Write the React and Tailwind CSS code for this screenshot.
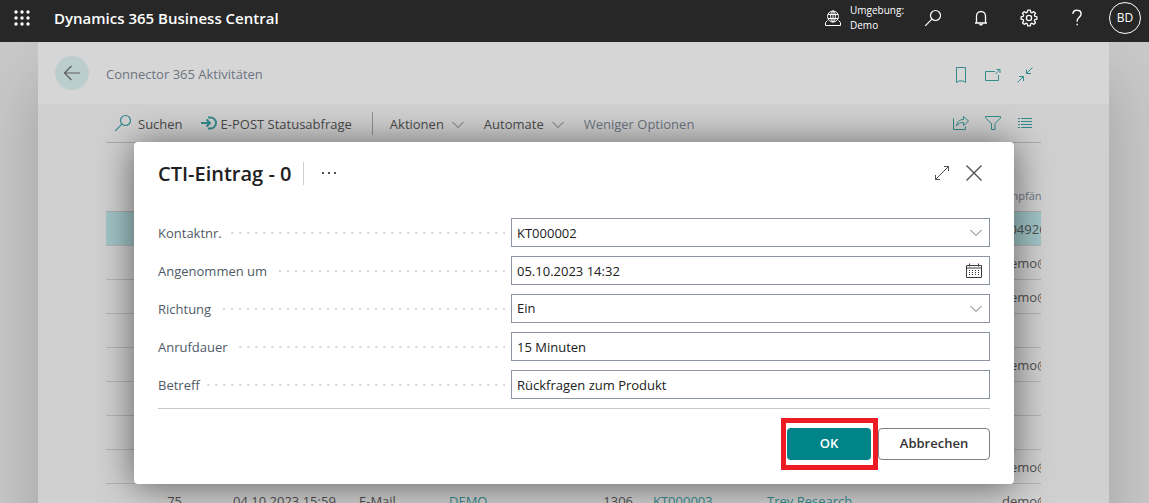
import React from "react";

function Icon({ size = 16, className = "", children, strokeWidth = 1 }) {
  return (
    <svg
      width={size}
      height={size}
      viewBox={`0 0 ${size} ${size}`}
      fill="none"
      stroke="currentColor"
      strokeWidth={strokeWidth}
      className={`shrink-0 ${className}`}
      aria-hidden="true"
    >
      {children}
    </svg>
  );
}

const SearchIcon = ({ className }) => (
  <Icon size={18} className={className} strokeWidth={1.2}>
    <circle cx="11.5" cy="6.5" r="5" />
    <path d="M7.9 10.1 1.2 16.8" />
  </Icon>
);

const Chevron = ({ className = "" }) => (
  <svg width="12" height="8" viewBox="0 0 12 8" fill="none" stroke="currentColor" className={`shrink-0 ${className}`} aria-hidden="true">
    <path d="M0.5 1 6 6.5 11.5 1" />
  </svg>
);

const GlobeIcon = () => (
  <Icon size={18}>
    <circle cx="9" cy="7.5" r="5.5" />
    <ellipse cx="9" cy="7.5" rx="2.4" ry="5.5" />
    <path d="M9 2v11M4 5.5h10M4 9.5h10" />
    <path d="M3.500 11.500 1.500 13.500v3h15v-3l-2-2" />
  </Icon>
);

const BellIcon = () => (
  <Icon size={18} strokeWidth={1.3}>
    <path d="M4.500 14V7a4.500 4.500 0 0 1 9 0v7M3 14h12" />
    <path d="M7.500 14.500a1.500 1.500 0 0 0 3 0" />
  </Icon>
);

const GearIcon = () => (
  <Icon size={18} strokeWidth={1.3}>
    <circle cx="9" cy="9" r="2.600" />
    <path
      strokeLinejoin="round"
      d="M7.700 1.200h2.600l.4 2 1.300.6 1.800-1.200 1.700 1.700-1.200 1.800.6 1.300 2 .4v2.400l-2 .4-.6 1.300 1.200 1.800-1.700 1.700-1.800-1.200-1.300.6-.4 2H7.700l-.4-2-1.300-.6-1.800 1.200-1.700-1.700 1.200-1.800-.6-1.300-2-.4V7.800l2-.4.6-1.300-1.200-1.800 1.700-1.700L6 3.800l1.300-.6z"
    />
  </Icon>
);

const HelpIcon = () => (
  <Icon size={18} strokeWidth={1.4}>
    <path d="M4.800 4.800A4.100 4.100 0 0 1 9 1.200c2.400 0 4.100 1.500 4.100 3.700 0 3.200-3.900 3.600-3.900 7v.8" />
    <path d="M8.500 15.500h1.400" />
  </Icon>
);

const EPostIcon = () => (
  <Icon size={16} strokeWidth={2}>
    <path d="M0 8h9M5.500 4.500 9 8l-3.500 3.500" />
    <path d="M7 2.500h2.500a5.500 5.500 0 0 1 0 11H7" strokeWidth="2" />
  </Icon>
);

const BookmarkIcon = () => (
  <Icon>
    <path d="M3.500.5h9v15L10 14H6l-2.500 1.500z" />
  </Icon>
);

const PopOutIcon = () => (
  <Icon>
    <path d="M10 4.500H.5v9h13V8" />
    <path d="M10.500 7 15 2.500M11.500 2.500H15v3.500" />
  </Icon>
);

const CollapseIcon = () => (
  <Icon>
    <path d="M15.500.5 9.500 6.500M9.500 2.500v4h4.500M.5 15.500l6-6M2 9.500h4.500V14" />
  </Icon>
);

const ShareIcon = () => (
  <Icon>
    <path d="M.5 3.500v11h12v-3" />
    <path d="M3.500 11c.4-4 2.800-6.500 7-6.500v-3L15.500 6l-5 4.500v-3c-3.500 0-5.500 1-7 3.500z" />
  </Icon>
);

const FilterIcon = () => (
  <Icon>
    <path d="M.5 1.500h15v1.500L10 8.500v6H6.500v-6L.5 3z" />
  </Icon>
);

const ListIcon = () => (
  <Icon>
    <path d="M1 3.500h2M4 3.500h11M1 6.500h2M4 6.500h11M1 9.500h2M4 9.500h11M1 12.500h2M4 12.500h11" />
  </Icon>
);

const CalendarIcon = () => (
  <Icon>
    <path d="M.5 2.500h15v12H.5zM3.500.5v3M12.500.5v3M.5 5h15" />
    <path d="M3 7.500h10.500M3 9.500h10.500M3 11.500h10.500" strokeDasharray="1 2" />
  </Icon>
);

const IconButton = ({ label, children, className = "" }) => (
  <button type="button" aria-label={label} className={`flex items-center justify-center ${className}`}>
    {children}
  </button>
);

function TopBar() {
  return (
    <header className="flex h-[42px] shrink-0 items-center bg-[#272727] pb-1.5 pl-3 pr-2 text-white">
      <IconButton label="App-Startfeld" className="size-5">
        <svg width="16" height="16" viewBox="0 0 16 16" fill="currentColor" aria-hidden="true">
          {[2, 8, 14].map((y) => [2, 8, 14].map((x) => <circle key={`${x}-${y}`} cx={x} cy={y} r="1.700" />))}
        </svg>
      </IconButton>
      <a href="#start" className="ml-[22px] text-[15px] font-semibold">
        Dynamics 365 Business Central
      </a>
      <div className="ml-auto flex items-center">
        <GlobeIcon />
        <div className="ml-2 w-[66px] text-[10px] font-medium leading-[15px]">
          Umgebung:
          <br />
          Demo
        </div>
        <div className="mr-[15px] flex gap-[14px]">
          <IconButton label="Suchen" className="w-[34px]"><SearchIcon /></IconButton>
          <IconButton label="Benachrichtigungen" className="w-[34px]"><BellIcon /></IconButton>
          <IconButton label="Einstellungen" className="w-[34px]"><GearIcon /></IconButton>
          <IconButton label="Hilfe" className="w-[34px]"><HelpIcon /></IconButton>
        </div>
        <button type="button" className="size-8 rounded-full border border-white text-xs font-medium">
          BD
        </button>
      </div>
    </header>
  );
}

function Toolbar() {
  return (
    <div className="mx-[68px] flex h-[39px] items-center border-b border-[#ababab] text-[13px] text-[#4a4a4a]">
      <button type="button" className="flex items-center gap-1.5 pl-2">
        <SearchIcon className="text-[#358a8e]" />
        <span className="pt-1">Suchen</span>
      </button>
      <button type="button" className="ml-[18px] flex items-center gap-1">
        <span className="text-[#358a8e]"><EPostIcon /></span>
        <span className="pt-1">E-POST Statusabfrage</span>
      </button>
      <span className="ml-5 h-[23px] w-px bg-[#8b9098]" />
      <button type="button" className="ml-[17px] flex items-center gap-2">
        <span className="pt-1">Aktionen</span>
        <Chevron className="mt-1 text-[#6b6b6b]" />
      </button>
      <button type="button" className="ml-5 flex items-center gap-2">
        <span className="pt-1">Automate</span>
        <Chevron className="mt-1 text-[#6b6b6b]" />
      </button>
      <button type="button" className="ml-5 pt-1 text-[#6d7480]">Weniger Optionen</button>
      <div className="ml-auto mr-2 flex gap-4 text-[#358a8e]">
        <IconButton label="Teilen"><ShareIcon /></IconButton>
        <IconButton label="Filtern"><FilterIcon /></IconButton>
        <IconButton label="Listenansicht"><ListIcon /></IconButton>
      </div>
    </div>
  );
}

const rows = [
  { to: "+04926", selected: true },
  { to: "demo@" },
  { to: "demo@" },
  { to: "" },
  { to: "demo@" },
  { to: "" },
  { to: "" },
  { to: "demo@" },
  { nr: "75", date: "04.10.2023 15:59", kind: "E-Mail", user: "DEMO", code: "1306", contact: "KT000003", name: "Trey Research", to: "demo@" },
];

function EntryTable() {
  const cell = "overflow-hidden whitespace-nowrap px-2.5 pt-1";
  return (
    <div className="mx-[68px] overflow-hidden">
      <table className="w-full table-fixed border-collapse text-[13px] text-[#4f4f4f]">
        <colgroup>
          <col className="w-[86px]" />
          <col className="w-[31px]" />
          <col className="w-[126px]" />
          <col className="w-[90px]" />
          <col className="w-[101px]" />
          <col className="w-[103px]" />
          <col className="w-[114px]" />
          <col />
          <col className="w-[49px]" />
        </colgroup>
        <thead>
          <tr className="h-[68px] border-b border-[#ababab] text-[11px] text-[#6d7480]">
            <td colSpan={8} />
            <th scope="col" className="overflow-hidden whitespace-nowrap pb-1.5 pl-2.5 text-left align-bottom font-normal">Empfänger</th>
          </tr>
        </thead>
        <tbody>
          {rows.map((r, i) => (
            <tr key={i} className={`h-[34px] border-b border-[#b3b3b3] ${r.selected ? "bg-[#a1c5c7]" : ""}`}>
              <td className={`${cell} text-right`}>{r.nr}</td>
              <td />
              <td className={cell}>{r.date}</td>
              <td className={cell}>{r.kind}</td>
              <td className={cell}>{r.user && <a href="#user" className="text-[#358a8e]">{r.user}</a>}</td>
              <td className={`${cell} text-right`}>{r.code}</td>
              <td className={cell}>{r.contact && <a href="#contact" className="text-[#358a8e]">{r.contact}</a>}</td>
              <td className={cell}>{r.name && <a href="#company" className="text-[#358a8e]">{r.name}</a>}</td>
              <td className="overflow-hidden whitespace-nowrap pl-2.5 pt-1">{r.to}</td>
            </tr>
          ))}
        </tbody>
      </table>
    </div>
  );
}

function Field({ id, label, children }) {
  return (
    <div className="flex items-center gap-1.5">
      <div className="flex w-[347px] items-center gap-1.5">
        <label htmlFor={id} className="pt-0.5 text-[13px] text-[#505a66]">{label}</label>
        <span className="h-0.5 flex-1 bg-[linear-gradient(to_right,transparent_6px,#d6d6d6_6px)] bg-[size:8px_2px] bg-right" />
      </div>
      <div className="relative flex-1">{children}</div>
    </div>
  );
}

const control = "block h-[29px] w-full appearance-none rounded-none border border-[#8b95a3] bg-white px-[5px] text-[13px] text-[#212121] outline-none";
const adornment = "absolute inset-y-0 right-2 flex items-center";

function EntryDialog() {
  return (
    <section
      role="dialog"
      aria-labelledby="dialog-title"
      className="w-[880px] max-w-full rounded-sm bg-white px-6 pb-6 pt-[17px] shadow-[0_2px_36px_rgba(0,0,0,0.55)]"
    >
      <div className="flex h-7 items-center">
        <h1 id="dialog-title" className="pt-0.5 text-[20px] font-semibold text-[#212121]">CTI-Eintrag - 0</h1>
        <span className="ml-3 h-[23px] w-px bg-[#cfcfcf]" />
        <IconButton label="Weitere Optionen" className="ml-[17px] text-[#505050]">
          <svg width="16" height="4" viewBox="0 0 16 4" fill="currentColor" aria-hidden="true">
            <path d="M1 1h2v2H1zM7 1h2v2H7zM13 1h2v2h-2z" />
          </svg>
        </IconButton>
        <div className="ml-auto mr-2 flex gap-4 text-[#505050]">
          <IconButton label="Maximieren">
            <Icon>
              <path d="M1.500 14.500l13-13M10 1.500h4.500V6M1.500 10v4.500H6" />
            </Icon>
          </IconButton>
          <IconButton label="Schließen">
            <Icon strokeWidth={1.4}>
              <path d="M.5.5l15 15M15.500.5l-15 15" />
            </Icon>
          </IconButton>
        </div>
      </div>

      <form onSubmit={(e) => e.preventDefault()}>
        <div className="mt-[31px] flex flex-col gap-[9px] border-b border-[#c8c8c8] pb-[9px]">
          <Field id="kontakt" label="Kontaktnr.">
            <input id="kontakt" defaultValue="KT000002" className={control} />
            <IconButton label="Kontakt auswählen" className={`${adornment} text-[#6b6b6b]`}><Chevron /></IconButton>
          </Field>
          <Field id="angenommen" label="Angenommen um">
            <input id="angenommen" defaultValue="05.10.2023 14:32" className={control} />
            <IconButton label="Datum auswählen" className={`${adornment} text-[#3c3c3c]`}><CalendarIcon /></IconButton>
          </Field>
          <Field id="richtung" label="Richtung">
            <select id="richtung" defaultValue="Ein" className={control}>
              <option>Ein</option>
              <option>Aus</option>
            </select>
            <span className={`${adornment} pointer-events-none text-[#6b6b6b]`}><Chevron /></span>
          </Field>
          <Field id="dauer" label="Anrufdauer">
            <input id="dauer" defaultValue="15 Minuten" className={control} />
          </Field>
          <Field id="betreff" label="Betreff">
            <input id="betreff" defaultValue="Rückfragen zum Produkt" className={control} />
          </Field>
        </div>
        <div className="mt-[19px] flex justify-end gap-[7px] text-[13px] font-semibold">
          <div className="relative">
            <button type="submit" className="h-8 w-[84px] rounded-sm bg-[#008489] text-white">OK</button>
            <span className="pointer-events-none absolute -inset-y-2.5 -left-1.5 -right-[7px] border-[5px] border-[#ed1c24]" />
          </div>
          <button type="button" className="h-8 w-28 rounded-sm border border-[#7f7f7f] bg-white text-[#333]">Abbrechen</button>
        </div>
      </form>
    </section>
  );
}

export default function App() {
  return (
    <div className="flex h-screen flex-col overflow-hidden bg-[#c8c8c8] font-['Open_Sans','Noto_Sans',sans-serif]">
      <TopBar />
      <div className="relative flex-1 overflow-hidden">
        <main className="ml-[38px] mr-10 min-h-full bg-[#d0d0d0] shadow-[0_40px_60px_rgba(0,0,0,0.2)]">
          <div className="flex h-[62px] items-center bg-[#d6d6d6] pl-[17px] pr-[76px]">
            <IconButton label="Zurück" className="size-[34px] rounded-full bg-[#bccdce] text-[#5c5c5c]">
              <Icon size={18} strokeWidth={1.2}>
                <path d="M17 9H1.500M8.500 2 1.500 9l7 7" />
              </Icon>
            </IconButton>
            <h2 className="ml-[17px] pt-1 text-[13px] text-[#6d7480]">Connector 365 Aktivitäten</h2>
            <div className="ml-auto flex gap-4 pt-1 text-[#358a8e]">
              <IconButton label="Lesezeichen"><BookmarkIcon /></IconButton>
              <IconButton label="In neuem Fenster öffnen"><PopOutIcon /></IconButton>
              <IconButton label="Verkleinern"><CollapseIcon /></IconButton>
            </div>
          </div>
          <Toolbar />
          <EntryTable />
        </main>
        <div className="absolute inset-0 flex items-start justify-center pr-px pt-[100px]">
          <EntryDialog />
        </div>
      </div>
    </div>
  );
}
